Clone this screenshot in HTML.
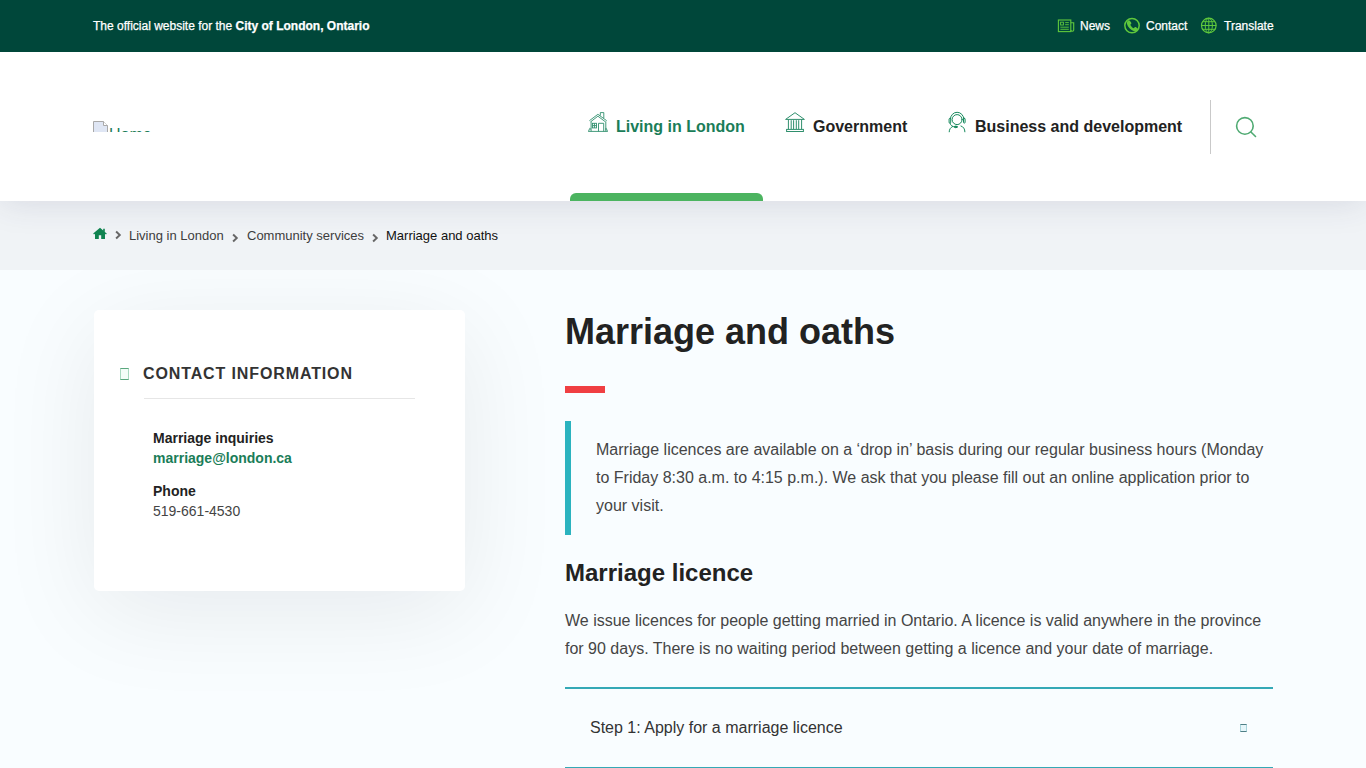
<!DOCTYPE html>
<html lang="en"><head><meta charset="utf-8"><title>Marriage and oaths | City of London</title>
<style>
*{box-sizing:border-box;margin:0;padding:0}
html,body{width:1366px;height:768px;overflow:hidden}
body{font-family:"Liberation Sans",Arial,sans-serif;background:#f9fdff;color:#333;position:relative}
a{text-decoration:none;color:inherit}
.abs{position:absolute;white-space:nowrap}
#top{position:absolute;left:0;top:0;width:1366px;height:52px;background:#00473a}
#top .t{position:absolute;top:19px;font-size:12px;line-height:14px;color:#fff;-webkit-text-stroke:0.25px #fff}
#hdr{position:absolute;left:0;top:52px;width:1366px;height:149px;background:#fff;box-shadow:0 0 34px rgba(50,50,93,.14)}
.nav{position:absolute;top:118px;font-size:16px;line-height:18px;font-weight:bold;color:#222;white-space:nowrap}
#tab{position:absolute;left:570px;top:193px;width:193px;height:8px;background:#4cb460;border-radius:6px 6px 0 0}
#crumb{position:absolute;left:0;top:201px;width:1366px;height:69px;background:#f0f3f6}
.bc{position:absolute;top:228px;font-size:13px;line-height:15px;color:#3d3d3d;white-space:nowrap}
#main{position:absolute;left:0;top:270px;width:1366px;height:498px;background:#f9fdff}
#card{position:absolute;left:94px;top:310px;width:371px;height:281px;background:#fff;border-radius:5px;box-shadow:0 20px 100px rgba(0,15,30,.08)}
h1{position:absolute;left:565px;top:311px;font-size:36px;line-height:42px;font-weight:bold;color:#222;white-space:nowrap}
#red{position:absolute;left:565px;top:386px;width:40px;height:7px;background:#f03f42}
#bq{position:absolute;left:565px;top:421px;width:6px;height:114px;background:#2bb3bf}
.p{position:absolute;font-size:16px;line-height:28px;color:#454545;white-space:nowrap}
h2{position:absolute;left:565px;top:559px;font-size:24px;line-height:28px;font-weight:bold;color:#222;white-space:nowrap}
.ln{position:absolute;left:565px;width:708px;height:2px;background:#35a9b6}
</style></head><body>
<div id="main"></div>
<div id="card"></div>
<div class="abs" style="left:560px;top:270px;width:806px;height:498px;background:#f9fdff"></div>
<div id="crumb"></div>
<div id="hdr"></div>
<div id="top">
 <div class="t" style="left:93px">The official website for the <b>City of London, Ontario</b></div>
 <div class="t" style="left:1080px">News</div>
 <div class="t" style="left:1146px">Contact</div>
 <div class="t" style="left:1224px">Translate</div>
</div>
<div class="nav" style="left:616px;color:#1a7d58">Living in London</div>
<div class="nav" style="left:813px">Government</div>
<div class="nav" style="left:975px">Business and development</div>
<div class="abs" style="left:1210px;top:100px;width:1px;height:54px;background:#c9c9c9"></div>

<!-- top icons -->
<svg class="abs" style="left:1057px;top:17px" width="18" height="17" viewBox="0 0 18 17" fill="none" stroke="#5fc83c" stroke-width="1.100">
 <rect x="1.400" y="3" width="12.400" height="11.600"/>
 <path d="M13.800 5.800h2.900v7.300a1.500 1.500 0 0 1-2.900 0"/>
 <rect x="3.600" y="5.200" width="2.800" height="2.800" stroke-width=".9"/>
 <path d="M8.200 5.600h3.600M8.200 7.700h3.600M3.400 10.200h8.400M3.400 12.300h8.400" stroke-width=".9"/>
</svg>
<svg class="abs" style="left:1123px;top:17px" width="18" height="18" viewBox="0 0 18 18" fill="none">
 <circle cx="9" cy="8.600" r="7.200" stroke="#5fc83c" stroke-width="1.500"/>
 <path d="M5 3.800c.6-.6 1.500-.6 2 .1l1.100 1.500c.4.500.3 1.200-.1 1.600l-.7.700c.6 1.500 1.800 2.800 3.500 3.600l.7-.8c.4-.5 1.100-.5 1.600-.2l1.500 1.100c.6.500.7 1.400.1 2-.9 1-2.300 1.300-3.600.8-3.600-1.300-6.200-4-7.200-7.400-.4-1.100.100-2.300 1.100-3z" fill="#5fc83c"/>
</svg>
<svg class="abs" style="left:1200px;top:17px" width="18" height="18" viewBox="0 0 18 18" fill="none" stroke="#5fc83c" stroke-width="1">
 <circle cx="8.800" cy="8.500" r="7.300" stroke-width="1.200"/>
 <ellipse cx="8.800" cy="8.500" rx="3.600" ry="7.300"/>
 <path d="M8.800 1v15M1.300 8.500h15M2.400 4.700h12.800M2.400 12.300h12.800"/>
</svg>
<!-- logo (broken image placeholder) -->
<div class="abs" style="left:93px;top:121px;width:62px;height:11px;overflow:hidden">
 <svg style="position:absolute;left:0;top:0" width="16" height="16" viewBox="0 0 16 16"><path d="M.5.500h10l4 4v11h-14z" fill="#dfe6f4" stroke="#a9a9a9"/><path d="M10.500.500v4h4" fill="#fff" stroke="#a9a9a9"/></svg>
 <span style="position:absolute;left:16px;top:5px;font-size:16px;line-height:18px;color:#1a7d58">Home</span>
</div>
<!-- nav icons -->
<svg class="abs" style="left:588px;top:112px" width="20" height="20" viewBox="0 0 20 20" fill="none" stroke="#2f8f6d" stroke-width=".9">
 <path d="M1.400 8.700L9.900 2.300l8.800 6.400M2.600 9.800L9.900 4.200l7.500 5.600" />
 <path d="M12.300 3.600V.600h3.500v5.500"/>
 <path d="M3.100 9.400v10M17.800 9.400v10M.3 19.400h19.400"/>
 <path d="M.5 19.400l1.200-3 1.300 1M19.500 19.400l-1.200-3-1.300 1"/>
 <rect x="4.400" y="11.300" width="4.100" height="4.600"/>
 <path d="M6.450 11.300v4.600M4.400 13.600h4.100"/>
 <path d="M10.500 19.400v-8.100h5.200v8.100"/>
</svg>
<svg class="abs" style="left:785px;top:112px" width="20" height="20" viewBox="0 0 20 20" fill="none" stroke="#2f8f6d" stroke-width="1">
 <path d="M10 .7L.6 7.400h18.800z" stroke-linejoin="round"/>
 <path d="M3.400 7.400v10M16.600 7.400v10"/>
 <path d="M6.200 8.200v9M8.600 8.200v9M11.300 8.200v9M13.700 8.200v9" stroke-width="1"/>
 <rect x="1.600" y="17.400" width="16.800" height="2.100"/>
</svg>
<svg class="abs" style="left:947px;top:111px" width="21" height="22" viewBox="0 0 21 22" fill="none" stroke="#15895c" stroke-width="1" stroke-linecap="round">
 <circle cx="10.100" cy="8.600" r="5"/>
 <path d="M3.400 8a6.700 6.700 0 0 1 13.400 0"/>
 <rect x="2.100" y="7.300" width="1.600" height="4.800" rx=".8"/>
 <rect x="16.500" y="7.300" width="1.600" height="4.800" rx=".8"/>
 <path d="M3 12.100c.4 2.200 2.200 3.700 5 3.800"/>
 <ellipse cx="8.800" cy="15.900" rx="1.500" ry=".8" fill="#15895c"/>
 <path d="M2.200 20.800c0-2.500 1.400-4.300 3.300-5.200M14 15c2.400.7 3.900 2.900 3.900 5.800"/>
</svg>
<svg class="abs" style="left:1234px;top:115px" width="24" height="24" viewBox="0 0 24 24" fill="none" stroke="#4faa72" stroke-width="1.600" stroke-linecap="round">
 <circle cx="10.900" cy="10.900" r="8.300"/>
 <path d="M17.200 17.200l4.300 4.300"/>
</svg>
<!-- breadcrumb icons -->
<svg class="abs" style="left:93px;top:227px" width="14" height="13" viewBox="0 0 14 13"><path d="M7 .8L.2 6.600l.8.900 1-.8v5.300h3.800V8.300h2.400v3.700H12V6.700l1 .8.800-.9-2-1.700V1.700h-1.600v1.800z" fill="#0f8350"/></svg>
<svg class="abs" style="left:115px;top:230px" width="7" height="10" viewBox="0 0 7 10" fill="none" stroke="#666" stroke-width="1.900"><path d="M1.100 1.500l3.700 3.500-3.700 3.500"/></svg>
<svg class="abs" style="left:232px;top:233px" width="7" height="10" viewBox="0 0 7 10" fill="none" stroke="#666" stroke-width="1.900"><path d="M1.100 1.500l3.700 3.500-3.700 3.500"/></svg>
<svg class="abs" style="left:372px;top:233px" width="7" height="10" viewBox="0 0 7 10" fill="none" stroke="#666" stroke-width="1.900"><path d="M1.100 1.500l3.700 3.500-3.700 3.500"/></svg>
<div id="tab"></div>
<div class="bc" style="left:129px">Living in London</div>
<div class="bc" style="left:247px">Community services</div>
<div class="bc" style="left:386px;color:#111">Marriage and oaths</div>
<div class="abs" style="left:143px;top:365px;font-size:16px;line-height:18px;font-weight:bold;letter-spacing:.88px;color:#333">CONTACT INFORMATION</div>
<div class="abs" style="left:144px;top:398px;width:271px;height:1px;background:#e6e6e6"></div>
<div class="abs" style="left:153px;top:430px;font-size:14px;line-height:16px;font-weight:bold;color:#222">Marriage inquiries</div>
<div class="abs" style="left:153px;top:450px;font-size:14px;line-height:16px;font-weight:bold;color:#1a7d58">marriage@london.ca</div>
<div class="abs" style="left:153px;top:483px;font-size:14px;line-height:16px;font-weight:bold;color:#222">Phone</div>
<div class="abs" style="left:153px;top:503px;font-size:14px;line-height:16px;color:#444">519-661-4530</div>

<div class="abs" style="left:120px;top:368px;width:9px;height:12px;border:1px solid #a9d9c0;border-top-color:#5aa77e;border-bottom-color:#5aa77e;background:#f4fdf8"></div>
<div class="abs" style="left:1240px;top:724px;width:7px;height:8px;border:1px solid #a8d4dc;border-top-color:#4f7f86;border-bottom-color:#4f7f86;background:#e6f6fa"></div>
<h1>Marriage and oaths</h1>
<div id="red"></div>
<div id="bq"></div>
<div class="p" style="left:596px;top:436px">Marriage licences are available on a ‘drop in’ basis during our regular business hours (Monday<br>to Friday 8:30 a.m. to 4:15 p.m.). We ask that you please fill out an online application prior to<br>your visit.</div>
<h2>Marriage licence</h2>
<div class="p" style="left:565px;top:607px">We issue licences for people getting married in Ontario. A licence is valid anywhere in the province<br>for 90 days. There is no waiting period between getting a licence and your date of marriage.</div>
<div class="ln" style="top:687px"></div>
<div class="p" style="left:590px;top:714px;color:#333">Step 1: Apply for a marriage licence</div>
<div class="ln" style="top:767px"></div>
</body></html>
